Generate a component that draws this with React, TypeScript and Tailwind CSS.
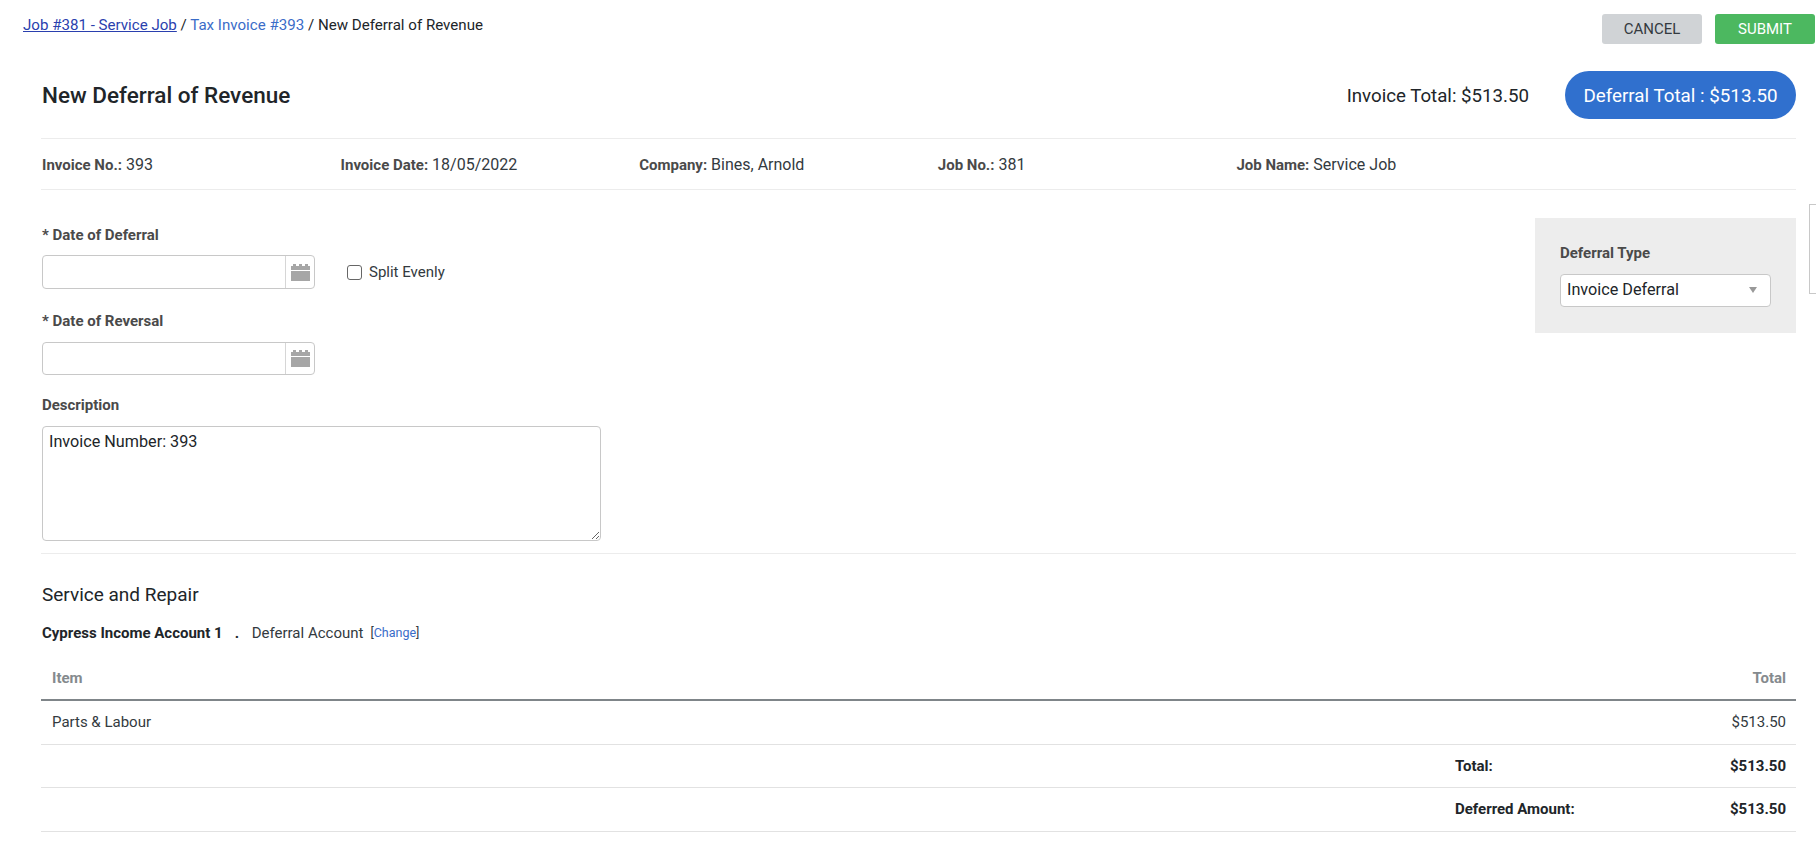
const font = "font-['Roboto',sans-serif]";

function CalendarIcon() {
  return (
    <svg width="19" height="17" viewBox="0 0 19 17" fill="#a6a6a6">
      <rect x="2" y="0" width="3" height="4" />
      <rect x="8" y="0" width="3" height="4" />
      <rect x="14" y="0" width="3" height="4" />
      <rect x="0" y="2" width="19" height="4" />
      <rect x="0" y="7" width="19" height="10" />
    </svg>
  );
}

function DateField({ className }: { className: string }) {
  return (
    <div className={`flex w-[273px] border border-[#c8c8c8] rounded-[4px] ${className}`}>
      <input type="text" className="flex-1 min-w-0 outline-none bg-transparent" />
      <div className="w-[29px] border-l border-[#d6d6d6] flex items-center justify-center">
        <CalendarIcon />
      </div>
    </div>
  );
}

function Info({ label, value }: { label: string; value: string }) {
  return (
    <div className="w-[298.6px] text-[16px] text-[#333a40]">
      <b className="text-[15px] font-bold text-[#4a4a4a]">{label}</b> {value}
    </div>
  );
}

function TotalRow({ label, value, height }: { label: string; value: string; height: string }) {
  return (
    <div className={`flex items-center border-b border-[#e2e2e2] pr-[10px] text-[15px] font-bold text-[#212529] ${height}`}>
      <div className="ml-[1414px] flex-1">{label}</div>
      <div>{value}</div>
    </div>
  );
}

export default function App() {
  return (
    <div className={`relative w-[1816px] h-[845px] overflow-hidden bg-white text-[#212529] ${font}`}>
      <div className="flex justify-between pl-[23px] pr-px pt-[14px]">
        <div className="text-[15.1px] leading-[20px] pt-[1px]">
          <a href="#" className="text-[#2a3fae] underline">Job #381 - Service Job</a>
          <span> / </span>
          <a href="#" className="text-[#3a6cc8]">Tax Invoice #393</a>
          <span> / New Deferral of Revenue</span>
        </div>
        <div className="flex gap-[13px]">
          <button className="w-[100px] h-[30px] rounded-[3px] bg-[#d0d3d6] text-[15px] text-[#343a40]">CANCEL</button>
          <button className="w-[100px] h-[30px] rounded-[3px] bg-[#4cb860] text-[15px] text-white">SUBMIT</button>
        </div>
      </div>

      <div className="ml-[41px] mr-[20px]">
        <div className="flex items-center justify-between mt-[27px] h-[48px] pl-px">
          <h1 className="text-[22.5px] pt-px font-medium text-[#212529]">New Deferral of Revenue</h1>
          <div className="flex items-center gap-[36px]">
            <span className="text-[18.7px] pt-[2px]">Invoice Total: $513.50</span>
            <div className="w-[231px] h-[48px] pt-[2px] rounded-full bg-[#3070ce] text-white text-[18.8px] font-normal flex items-center justify-center">
              Deferral Total : $513.50
            </div>
          </div>
        </div>

        <div className="mt-[19px] h-[52px] pt-px border-y border-[#ececec] flex items-center pl-px">
          <Info label="Invoice No.:" value="393" />
          <Info label="Invoice Date:" value="18/05/2022" />
          <Info label="Company:" value="Bines, Arnold" />
          <Info label="Job No.:" value="381" />
          <Info label="Job Name:" value="Service Job" />
        </div>

        <div className="flex justify-between items-start mt-[28px] h-[336px] border-b border-[#ececec] pl-px">
          <div>
            <label className="block text-[15px] leading-[20px] font-bold text-[#4a4a4a] mt-[7px]">* Date of Deferral</label>
            <div className="flex items-center mt-[10px]">
              <DateField className="h-[34px]" />
              <label className="flex items-center ml-[32px] text-[15px] text-[#333a40]">
                <input type="checkbox" className="appearance-none w-[15px] h-[15px] border border-[#666] rounded-[3px] mr-[7px]" />
                Split Evenly
              </label>
            </div>
            <label className="block text-[15px] leading-[20px] font-bold text-[#4a4a4a] mt-[22px]">* Date of Reversal</label>
            <DateField className="h-[33px] mt-[11px]" />
            <label className="block text-[15px] leading-[20px] font-bold text-[#4a4a4a] mt-[20px]">Description</label>
            <textarea
              defaultValue="Invoice Number: 393"
              className="block mt-[11px] w-[559px] h-[115px] border border-[#c8c8c8] rounded-[4px] px-[6px] py-[3px] text-[16.2px] leading-[24px] text-[#212529] outline-none"
            />
          </div>
          <div className="w-[261px] h-[115px] bg-[#ededed] pt-[25px] pl-[25px]">
            <div className="text-[15px] leading-[20px] font-bold text-[#4a4a4a]">Deferral Type</div>
            <div className="mt-[11px] w-[211px] h-[33px] bg-white border border-[#c8c8c8] rounded-[4px] flex items-center justify-between pl-[6px] pr-[13px] text-[16.2px]">
              <span>Invoice Deferral</span>
              <span className="w-0 h-0 mb-[2px] border-x-[4px] border-x-transparent border-t-[6px] border-t-[#999]" />
            </div>
          </div>
        </div>

        <h2 className="mt-[29px] pl-px text-[19px] leading-[24px] font-normal text-[#212529]">Service and Repair</h2>
        <div className="mt-[16px] pl-px flex items-center text-[15px] leading-[20px]">
          <b className="font-bold">Cypress Income Account 1</b>
          <b className="font-bold ml-[12px] w-[17px]">.</b>
          <span className="text-[#333a40]">Deferral Account</span>
          <span className="ml-[7px] text-[12.5px] text-[#333a40]">
            [<a href="#" className="text-[#3a6cc8]">Change</a>]
          </span>
        </div>

        <div className="mt-[13px] text-[15px]">
          <div className="flex items-center justify-between h-[45px] pt-px border-b-2 border-[#7f8589] pl-[11px] pr-[10px] font-bold text-[#858a8e]">
            <span>Item</span>
            <span>Total</span>
          </div>
          <div className="flex items-center justify-between h-[44px] border-b border-[#e2e2e2] pl-[11px] pr-[10px] text-[#333a40]">
            <span>Parts &amp; Labour</span>
            <span>$513.50</span>
          </div>
          <TotalRow label="Total:" value="$513.50" height="h-[43px]" />
          <TotalRow label="Deferred Amount:" value="$513.50" height="h-[44px]" />
          <TotalRow label="" value="$0.00" height="h-[44px]" />
        </div>
      </div>

      {/* tab stuck to the window edge, cut off on the right */}
      <div className="absolute left-[1809px] top-[204px] w-[20px] h-[90px] border border-[#c8c8c8] bg-white" />
    </div>
  );
}
